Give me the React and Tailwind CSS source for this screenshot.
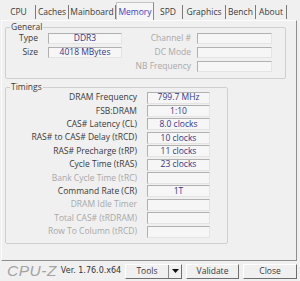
import React from 'react';

const tabs = [
  { name: 'CPU', w: 'w-[34px]' },
  { name: 'Caches', w: 'w-[33px]' },
  { name: 'Mainboard', w: 'w-[47px]' },
  { name: 'Memory', w: 'w-[38px]', active: true },
  { name: 'SPD', w: 'w-[29px]' },
  { name: 'Graphics', w: 'w-[43px]' },
  { name: 'Bench', w: 'w-[30px]' },
  { name: 'About', w: 'w-[31px]' },
];

const timings = [
  { label: 'DRAM Frequency', value: '799.7 MHz' },
  { label: 'FSB:DRAM', value: '1:10' },
  { label: 'CAS# Latency (CL)', value: '8.0 clocks' },
  { label: 'RAS# to CAS# Delay (tRCD)', value: '10 clocks' },
  { label: 'RAS# Precharge (tRP)', value: '11 clocks' },
  { label: 'Cycle Time (tRAS)', value: '23 clocks' },
  { label: 'Bank Cycle Time (tRC)', value: '', off: true },
  { label: 'Command Rate (CR)', value: '1T' },
  { label: 'DRAM Idle Timer', value: '', off: true },
  { label: 'Total CAS# (tRDRAM)', value: '', off: true },
  { label: 'Row To Column (tRCD)', value: '', off: true },
];

const Field = ({ className, children }) => (
  <div
    className={`flex items-center justify-center border border-t-[#b0b0b0] border-l-[#b0b0b0] border-b-[#e4e4e4] border-r-[#e4e4e4] bg-[#f6f6f6] text-[#35358a] leading-none ${className}`}
  >
    {children}
  </div>
);

const GroupLegend = ({ children }) => (
  <legend className="ml-[4px] px-[1px] leading-[10px] text-[#3a3a3a]">{children}</legend>
);

export default function App() {
  return (
    <div className="flex h-[281px] w-[300px] flex-col bg-[#f0f0f0] text-[8.5px] text-[#3a3a3a] font-['Open_Sans',sans-serif]">
      {/* tab strip */}
      <div className="flex h-[20px] pl-[2px]">
        {tabs.map((t) =>
          t.active ? (
            <div
              key={t.name}
              className={`${t.w} mt-[2px] flex h-[19px] items-center justify-center border border-b-0 border-l-[#c4c4c4] border-t-[#c4c4c4] border-r-[#8a8a8a] bg-[#f6f6f6] pt-[1px] text-[#4040c8]`}
            >
              {t.name}
            </div>
          ) : (
            <div key={t.name} className={`${t.w} flex items-center pt-[4px]`}>
              <span className="flex-1 text-center">{t.name}</span>
              <span className="h-[14px] w-px bg-[#7a7a7a]" />
            </div>
          )
        )}
      </div>

      {/* memory page */}
      <div className="ml-[1px] flex h-[241px] w-[296px] flex-col border border-t-[#fcfcfc] border-l-[#fcfcfc] border-b-[#8e8e8e] border-r-[#8e8e8e]">
        <fieldset className="ml-[3px] mt-[1px] h-[57px] w-[281px] rounded-[2px] border border-[#cfcfcf]">
          <GroupLegend>General</GroupLegend>
          <div className="flex pt-[1px]">
            <div className="flex flex-col gap-[3px]">
              <div className="flex h-[11px] items-center">
                <span className="w-[32px] text-right">Type</span>
                <Field className="ml-[10px] h-[11px] w-[74px]">DDR3</Field>
              </div>
              <div className="flex h-[11px] items-center">
                <span className="w-[32px] text-right">Size</span>
                <Field className="ml-[10px] h-[11px] w-[74px]">4018 MBytes</Field>
              </div>
            </div>
            <div className="flex flex-col gap-[3px] text-[#a8a8a8]">
              <div className="flex h-[11px] items-center">
                <span className="w-[69px] text-right">Channel #</span>
                <Field className="ml-[6px] h-[11px] w-[75px]" />
              </div>
              <div className="flex h-[11px] items-center">
                <span className="w-[69px] text-right">DC Mode</span>
                <Field className="ml-[6px] h-[11px] w-[75px]" />
              </div>
              <div className="flex h-[11px] items-center">
                <span className="w-[69px] text-right">NB Frequency</span>
                <Field className="ml-[6px] h-[11px] w-[75px]" />
              </div>
            </div>
          </div>
        </fieldset>

        <fieldset className="ml-[3px] mt-[3px] h-[162px] w-[223px] rounded-[2px] border border-[#cfcfcf]">
          <GroupLegend>Timings</GroupLegend>
          <div className="-mt-px flex flex-col">
            {timings.map((r) => (
              <div key={r.label} className="flex h-[13.4px] items-center">
                <span className={`w-[131px] text-right ${r.off ? 'text-[#a8a8a8]' : ''}`}>{r.label}</span>
                <Field className="ml-[10px] h-[12px] w-[63px]">{r.value}</Field>
              </div>
            ))}
          </div>
        </fieldset>
      </div>

      {/* footer */}
      <div className="flex flex-1 items-center">
        <span className="ml-[7px] text-[15.5px] italic leading-none tracking-[0.5px] text-[#a3a3a3] font-['Liberation_Sans',sans-serif]">
          CPU-Z
        </span>
        <span className="ml-[4px] text-[8px] text-[#333] font-['DejaVu_Sans',sans-serif]">Ver. 1.76.0.x64</span>
        <div className="ml-auto mr-[3px] flex gap-[4px]">
          <div className="flex h-[15px] w-[57px] border border-t-white border-l-white border-b-[#6e6e6e] border-r-[#6e6e6e]">
            <span className="flex flex-1 items-center justify-center">Tools</span>
            <span className="flex w-[13px] items-center justify-center border-l border-[#8a8a8a]">
              <svg width="7" height="4" viewBox="0 0 7 4">
                <path d="M0 0h7L3.5 4z" fill="#111" />
              </svg>
            </span>
          </div>
          <button className="h-[15px] w-[53px] border border-t-white border-l-white border-b-[#6e6e6e] border-r-[#6e6e6e]">
            Validate
          </button>
          <button className="h-[15px] w-[54px] border border-t-white border-l-white border-b-[#6e6e6e] border-r-[#6e6e6e]">
            Close
          </button>
        </div>
      </div>
    </div>
  );
}
